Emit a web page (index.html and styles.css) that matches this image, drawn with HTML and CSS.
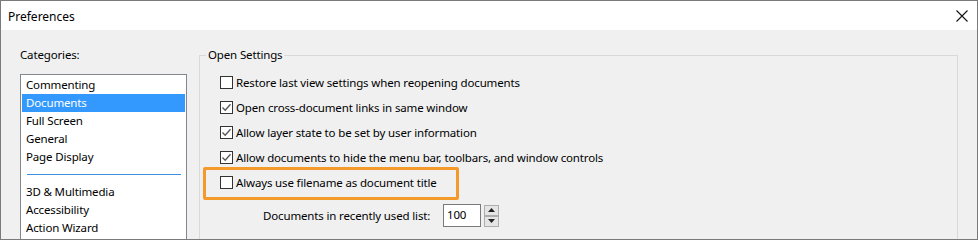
FILE: index.html
```html
<!DOCTYPE html>
<html>
<head>
<meta charset="utf-8">
<title>Preferences</title>
<link rel="stylesheet" href="styles.css">
</head>
<body>
<div class="window">
  <div class="titlebar">
    <span class="title">Preferences</span>
    <svg class="close" width="12" height="12" viewBox="0 0 12 12"><path d="M0.5 0.5L11.5 11.5M11.5 0.5L0.5 11.5" stroke="#111" stroke-width="1.1" fill="none"/></svg>
  </div>
  <div class="content">
    <div class="categories">
      <div class="label">Categories:</div>
      <div class="listbox">
        <div class="item">Commenting</div>
        <div class="item selected">Documents</div>
        <div class="item">Full Screen</div>
        <div class="item">General</div>
        <div class="item">Page Display</div>
        <div class="separator"></div>
        <div class="item">3D &amp; Multimedia</div>
        <div class="item">Accessibility</div>
        <div class="item">Action Wizard</div>
      </div>
    </div>
    <fieldset class="group">
      <legend>Open Settings</legend>
      <div class="group-body">
        <div class="row"><span class="box"></span><span>Restore last view settings when reopening documents</span></div>
        <div class="row"><span class="box checked"><svg width="11" height="11" viewBox="0 0 11 11"><path d="M1.5 5.5L4.2 8.3L9.5 2.2" stroke="#555" stroke-width="1.3" fill="none"/></svg></span><span>Open cross-document links in same window</span></div>
        <div class="row"><span class="box checked"><svg width="11" height="11" viewBox="0 0 11 11"><path d="M1.5 5.5L4.2 8.3L9.5 2.2" stroke="#555" stroke-width="1.3" fill="none"/></svg></span><span>Allow layer state to be set by user information</span></div>
        <div class="row"><span class="box checked"><svg width="11" height="11" viewBox="0 0 11 11"><path d="M1.5 5.5L4.2 8.3L9.5 2.2" stroke="#555" stroke-width="1.3" fill="none"/></svg></span><span>Allow documents to hide the menu bar, toolbars, and window controls</span></div>
        <div class="row"><span class="box"></span><span>Always use filename as document title</span></div>
        <div class="recent">
          <span class="recent-label">Documents in recently used list:</span>
          <span class="numbox">100</span>
          <span class="spinner">
            <span class="spin"><svg width="7" height="4" viewBox="0 0 7 4"><path d="M3.5 0L7 4H0Z" fill="#222"/></svg></span>
            <span class="spin"><svg width="7" height="4" viewBox="0 0 7 4"><path d="M0 0H7L3.5 4Z" fill="#222"/></svg></span>
          </span>
        </div>
      </div>
      <div class="highlight"></div>
    </fieldset>
  </div>
</div>
</body>
</html>
```
FILE: styles.css
```css
html, body {
  margin: 0;
  padding: 0;
  background: #f0f0f0;
}
.window {
  width: 978px;
  height: 240px;
  box-sizing: border-box;
  border: 1px solid #7a7a7a;
  background: #f0f0f0;
  overflow: hidden;
  font-family: "Noto Sans", "Open Sans", sans-serif;
  font-size: 11.5px;
  letter-spacing: -0.15px;
  color: #000;
}
.titlebar {
  height: 29px;
  background: #fff;
  display: flex;
  align-items: center;
  justify-content: space-between;
  padding: 0 8px 0 7px;
}
.title {
  font-size: 12px;
  letter-spacing: 0;
  padding-top: 1px;
}
.close {
  display: block;
  margin-right: 1px;
}
.content {
  display: flex;
  padding: 16px 0 0 19px;
  gap: 12px;
  align-items: flex-start;
}
.categories {
  width: 167px;
  display: flex;
  flex-direction: column;
}
.label {
  height: 18px;
  line-height: 18px;
  margin-bottom: 10px;
}
.listbox {
  background: #fff;
  border: 1px solid #828790;
  padding: 1px;
  height: 200px;
}
.item {
  height: 18px;
  line-height: 18px;
  padding-left: 4px;
}
.item.selected {
  background: #3399ff;
  color: #fff;
}
.separator {
  height: 1px;
  background: #3d8fdf;
  margin: 8px 4px 8px 5px;
}
.group {
  position: relative;
  width: 759px;
  margin: 0;
  padding: 0;
  border: 1px solid #d9d9d9;
  box-sizing: border-box;
  height: 220px;
}
.group legend {
  margin-left: 6px;
  padding: 0 2px;
  height: 18px;
  line-height: 18px;
}
.group-body {
  padding: 6px 0 0 20px;
}
.row {
  height: 25px;
  display: flex;
  align-items: center;
  gap: 3px;
}
.box {
  width: 13px;
  height: 13px;
  box-sizing: border-box;
  border: 1px solid #333;
  background: #fff;
  display: flex;
  align-items: center;
  justify-content: center;
  flex: none;
}
.box svg {
  display: block;
}
.recent {
  display: flex;
  align-items: center;
  margin-top: 9px;
  padding-left: 43px;
  height: 23px;
}
.recent-label {
  width: 180px;
  flex: none;
}
.numbox {
  width: 38px;
  height: 23px;
  box-sizing: border-box;
  border: 1px solid #7a7a7a;
  background: #fff;
  padding-left: 3px;
  line-height: 19px;
}
.spinner {
  display: flex;
  flex-direction: column;
  margin-left: 3px;
  width: 15px;
  height: 22px;
}
.spin {
  height: 11px;
  box-sizing: border-box;
  border: 1px solid #adadad;
  background: #e5e5e5;
  display: flex;
  align-items: center;
  justify-content: center;
}
.highlight {
  position: absolute;
  left: 3px;
  top: 103px;
  width: 256px;
  height: 33px;
  box-sizing: border-box;
  border: 3px solid #f39a2b;
  border-radius: 2px;
}
```
